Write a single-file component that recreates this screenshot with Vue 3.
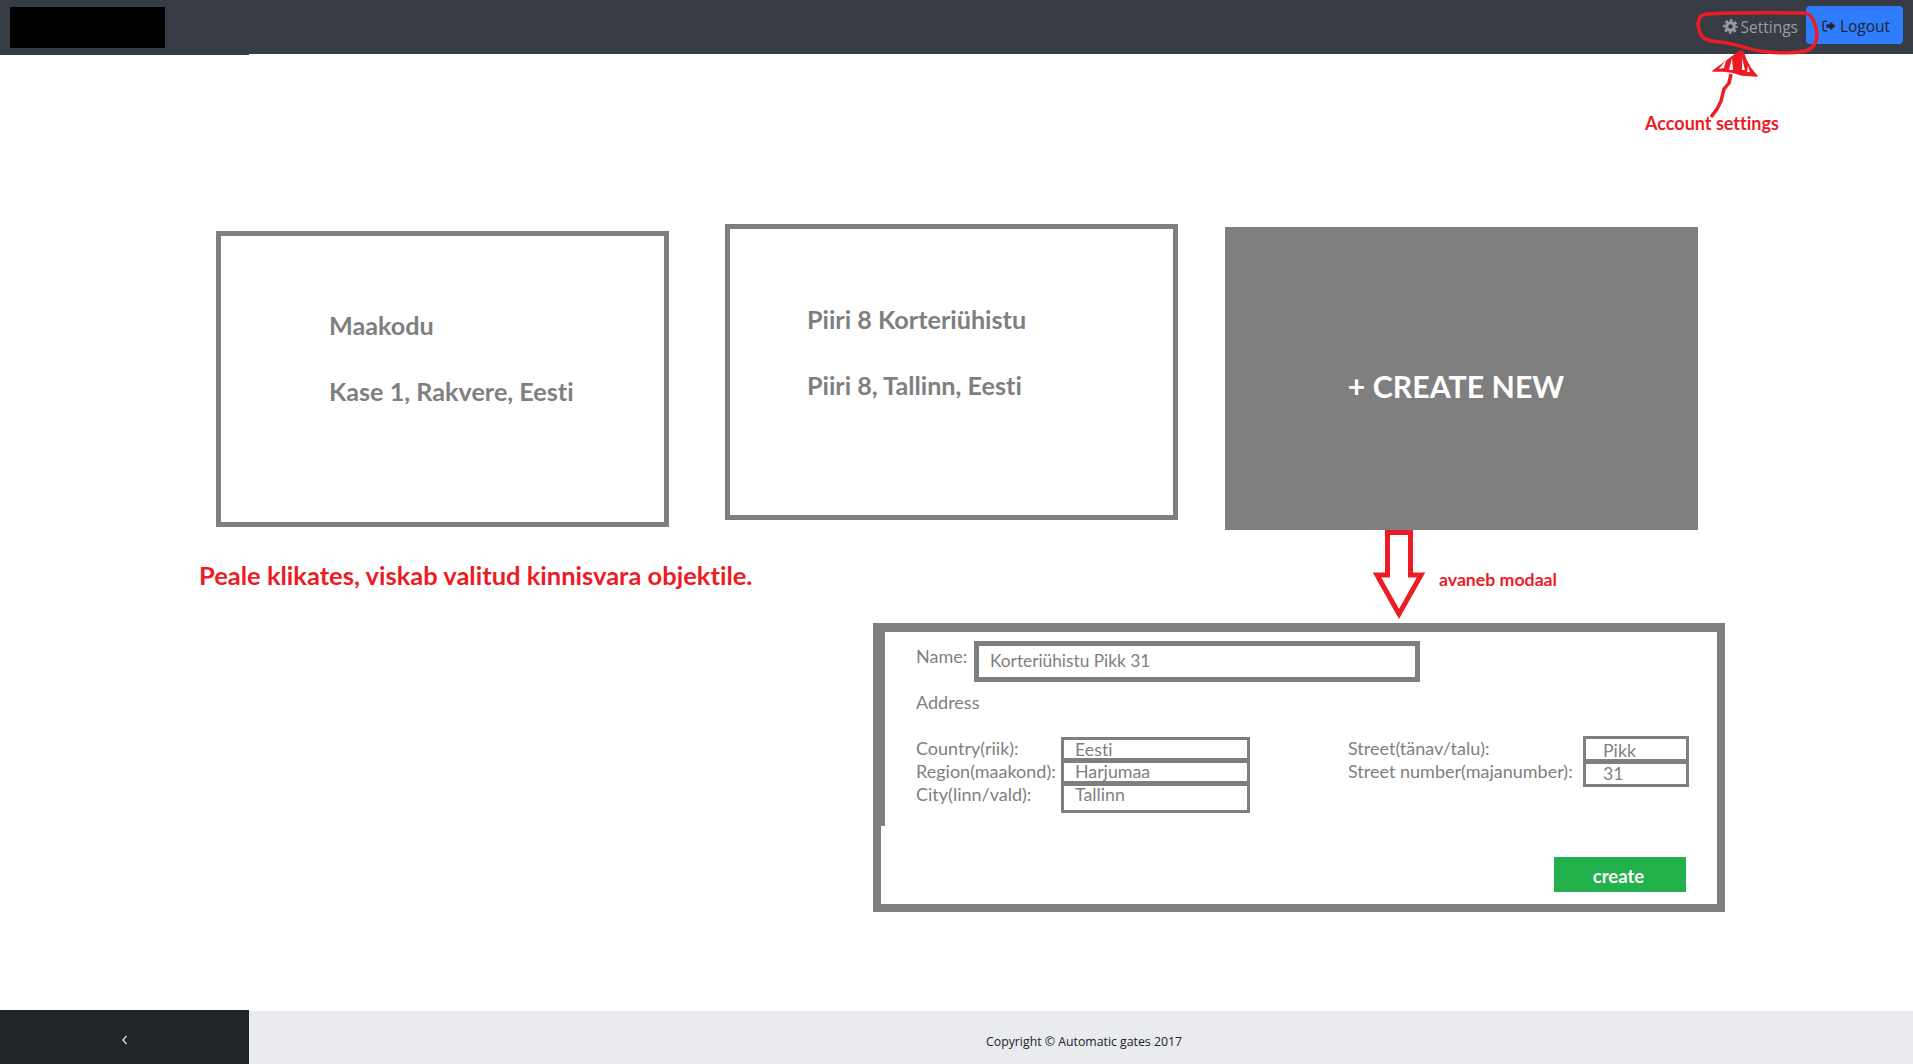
<script setup>
const homes = [
  { name: "Maakodu", address: "Kase 1, Rakvere, Eesti", cls: "card-a" },
  { name: "Piiri 8 Korteriühistu", address: "Piiri 8, Tallinn, Eesti", cls: "card-b" },
];
const leftFields = [
  { label: "Country(riik):", value: "Eesti" },
  { label: "Region(maakond):", value: "Harjumaa" },
  { label: "City(linn/vald):", value: "Tallinn" },
];
const rightFields = [
  { label: "Street(tänav/talu):", value: "Pikk" },
  { label: "Street number(majanumber):", value: "31" },
];
</script>

<template>
  <div class="page">
    <header class="topbar">
      <div class="logo"></div>
      <div class="top-actions">
        <a class="settings">
          <svg class="ico" viewBox="0 0 16 16" width="15" height="15">
            <circle cx="8" cy="8" r="4.100" fill="none" stroke="#9a9da0" stroke-width="3.200"/>
            <circle cx="8" cy="8" r="6.400" fill="none" stroke="#9a9da0" stroke-width="2.800" stroke-dasharray="2.800 2.227" stroke-dashoffset="1.400"/>
          </svg>
          Settings
        </a>
        <a class="logout">
          <svg class="ico" viewBox="0 0 14 14" width="14" height="14"><path fill="none" stroke="#212529" stroke-width="1.400" d="M5 2.200H2.600A1.600 1.600 0 0 0 1 3.800v6.400a1.600 1.600 0 0 0 1.600 1.600H5"/><path fill="#212529" d="M4.500 5.300h3.700V2.600L13.400 7l-5.200 4.400V8.700H4.500z"/></svg>
          Logout
        </a>
      </div>
    </header>

    <main class="content">
      <div class="side-sliver"></div>
      <section class="cards">
        <div v-for="h in homes" :key="h.name" class="card" :class="h.cls">
          <p>{{ h.name }}</p>
          <p>{{ h.address }}</p>
        </div>
        <div class="card-new"><span>+ CREATE NEW</span></div>
      </section>

      <section class="lower">
        <p class="note">Peale klikates, viskab valitud kinnisvara objektile.</p>
        <div class="modal">
          <div class="modal-top">
            <div class="name-row">
              <label>Name:</label>
              <div class="name-input">Korteriühistu Pikk 31</div>
            </div>
            <div class="address">Address</div>
            <div class="address-cols">
              <div class="field-col left">
                <div class="labels">
                  <div v-for="f in leftFields" :key="f.label">{{ f.label }}</div>
                </div>
                <div class="boxes">
                  <div v-for="f in leftFields" :key="f.value" class="box">{{ f.value }}</div>
                </div>
              </div>
              <div class="field-col right">
                <div class="labels">
                  <div v-for="f in rightFields" :key="f.label">{{ f.label }}</div>
                </div>
                <div class="boxes">
                  <div v-for="f in rightFields" :key="f.value" class="box">{{ f.value }}</div>
                </div>
              </div>
            </div>
          </div>
          <div class="modal-bottom">
            <button class="create">create</button>
          </div>
        </div>
      </section>
    </main>

    <footer class="footer">
      <div class="toggle">
        <svg viewBox="0 0 8 12" width="8" height="12"><path fill="none" stroke="#c8cacc" stroke-width="1.600" d="M5.500 2 2 6l3.500 4"/></svg>
      </div>
      <div class="copyright">Copyright © Automatic gates 2017</div>
    </footer>

    <!-- hand drawn notes lying over the mockup -->
    <svg class="scribble" width="1913" height="1064" viewBox="0 0 1913 1064">
      <path fill="none" stroke="#ed1c24" stroke-width="3.500" stroke-linejoin="round" d="M1708 14c30-2 70-1 97-1 7 1 11 11 12 21 0 9-4 15-12 17-14 3-30 2-45 0-14-2-26-8-40-9-10-1-17-2-20-9-3-7-2-14 1-17 2-1 4-2 7-2z"/>
      <path fill="#ed1c24" stroke="#ed1c24" stroke-width="1.500" stroke-linejoin="round" d="M1740 51l-27 20 10 0 9 1 10 3 15 1-6-7-5-9-3-8z"/>
      <path fill="none" stroke="#ed1c24" stroke-width="3.500" d="M1731 74l-2 9-5 6-3 12-4 8-6 8"/>
      <path fill="#fff" d="M1726 60l-7 9 5-1zM1732 58l-3 12 4 0zM1742 58l0 12 3 0zM1748 66l-1 6 3 0z"/>
      <path fill="#fff" stroke="#ed1c24" stroke-width="5" d="M1387.500 532.500h23v42.500h10.500l-22 39-22-39h10.500z"/>
    </svg>
    <span class="tag account">Account settings</span>
    <span class="tag modal-tag">avaneb modaal</span>
  </div>
</template>

<style scoped>
.page {
  position: relative;
  width: 1913px;
  height: 1064px;
  display: flex;
  flex-direction: column;
  background: #fff;
  overflow: hidden;
  font-family: "Lato", "Open Sans", sans-serif;
  font-variant-ligatures: none;
  color: #7f7f7f;
}

/* top bar */
.topbar {
  height: 54px;
  flex: none;
  background: #363b44;
  display: flex;
  align-items: flex-start;
  justify-content: space-between;
}
.logo { width: 155px; height: 41px; margin: 7px 0 0 10px; background: #000; }
.top-actions { display: flex; align-items: flex-start; margin: 6px 10px 0 0; }
.settings {
  display: flex;
  align-items: center;
  gap: 3px;
  height: 38px;
  padding-top: 3px;
  box-sizing: border-box;
  margin-right: 8px;
  font: 15.500px "Open Sans", sans-serif;
  color: #9a9da0;
}
.logout {
  box-sizing: border-box;
  display: flex;
  align-items: center;
  justify-content: center;
  gap: 4px;
  width: 97px;
  height: 38px;
  padding: 2px 0 0 3px;
  border-radius: 4px;
  background: #2f7dff;
  font: 15.500px "Open Sans", sans-serif;
  color: #212529;
}

/* property cards */
.content { flex: 1; }
.side-sliver { width: 249px; height: 1px; background: #363b44; }
.cards { display: flex; align-items: flex-start; padding: 169px 0 0 216px; height: 306px; }
.card {
  box-sizing: border-box;
  width: 453px;
  height: 296px;
  border: 5px solid #7f7f7f;
  font-size: 25.200px;
  font-weight: 700;
}
.card p { margin: 0 0 37px; line-height: 29px; }
.card-a { margin-top: 7px; padding: 75px 0 0 108px; }
.card-b { margin-left: 56px; padding: 76px 0 0 77px; }
.card-new {
  box-sizing: border-box;
  width: 473px;
  height: 303px;
  margin: 3px 0 0 47px;
  padding: 15px 11px 0 0;
  background: #7f7f7f;
  color: #fff;
  font-size: 30.300px;
  font-weight: 700;
  display: flex;
  align-items: center;
  justify-content: center;
}

/* lower area */
.lower { display: flex; align-items: flex-start; }
.note {
  width: 674px;
  margin: 30px 0 0 199px;
  line-height: 30px;
  font-size: 25.500px;
  font-weight: 700;
  color: #ed1c24;
  white-space: nowrap;
}
.modal {
  box-sizing: border-box;
  width: 852px;
  height: 289px;
  margin-top: 93px;
  border: 8px solid #7f7f7f;
  border-top-width: 9px;
  font-size: 18px;
  line-height: 23px;
}
.modal-top { height: 194px; border-left: 4px solid #7f7f7f; padding: 9px 0 0 31px; box-sizing: border-box; }
.name-row { display: flex; gap: 8px; }
.name-row label { width: 50px; margin-top: 4px; }
.name-input {
  box-sizing: border-box;
  width: 446px;
  height: 41px;
  border: 5px solid #7f7f7f;
  padding: 3px 0 0 11px;
  font-size: 17.300px;
}
.address { margin-top: 9px; }
.address-cols { display: flex; margin-top: 23px; }
.field-col { display: flex; }
.field-col.left { width: 432px; }
.field-col.left .labels { width: 145px; }
.field-col.right { margin-top: -1px; }
.field-col.right .labels { width: 235px; padding-top: 1px; }
.box {
  box-sizing: border-box;
  width: 189px;
  height: 24px;
  margin-bottom: -1px;
  border: 3.500px solid #7f7f7f;
  padding: 0 0 0 11px;
  font-size: 17.800px;
  line-height: 17px;
}
.left .box:first-child { padding-top: 1px; }
.left .box:last-child { height: 30px; }
.right .box { width: 106px; height: 26px; padding: 2px 0 0 17px; line-height: 19px; }
.right .box:last-child { padding-top: 0; }
.modal-bottom { display: flex; justify-content: flex-end; padding: 31px 31px 0 0; }
.create {
  width: 132px;
  height: 35px;
  padding: 2px 3px 0 0;
  border: 0;
  background: #22b14c;
  color: #fff;
  font: 700 18.500px "Lato", sans-serif;
  font-variant-ligatures: none;
}

/* footer */
.footer { flex: none; height: 54px; display: flex; }
.toggle {
  width: 249px;
  padding-top: 6px;
  box-sizing: border-box;
  background: #212529;
  display: flex;
  align-items: center;
  justify-content: center;
}
.copyright {
  flex: 1;
  margin-top: 1px;
  padding: 0 0 0 737px;
  background: #e9ebef;
  font: 12.300px/61px "Open Sans", sans-serif;
  color: #212529;
}

/* annotations */
.scribble { position: absolute; left: 0; top: 0; pointer-events: none; }
.tag { position: absolute; color: #ed1c24; font-weight: 700; line-height: 20px; white-space: nowrap; }
.account { left: 1645px; top: 113px; font-size: 18px; }
.modal-tag { left: 1439px; top: 570px; font-size: 17.700px; }
</style>

<style>
html, body { margin: 0; background: #fff; }
</style>
